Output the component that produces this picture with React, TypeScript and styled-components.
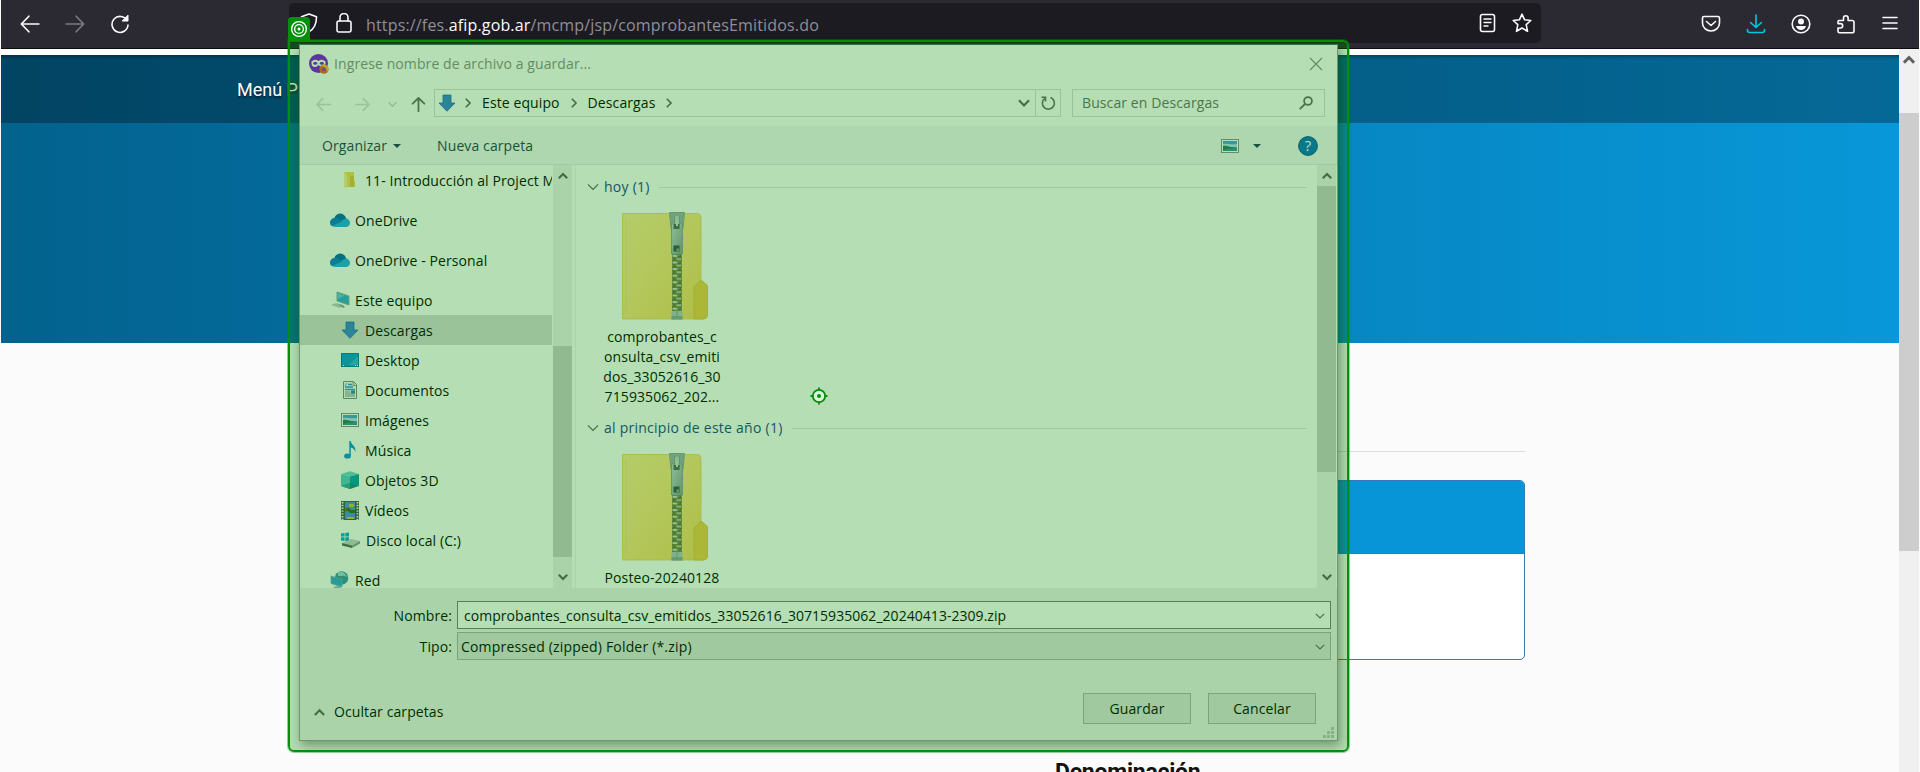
import React from "react";
import styled, { createGlobalStyle, css } from "styled-components";

const Global = createGlobalStyle`
  * { box-sizing: border-box; }
  html, body { margin: 0; padding: 0; background: #fbfbfb; overflow: hidden; }
`;

const Screen = styled.div`
  position: relative;
  width: 1920px;
  height: 772px;
  overflow: hidden;
  background: #fbfbfb;
  display: flex;
  flex-direction: column;
  font-family: "Open Sans", "Noto Sans", sans-serif;
`;

/* ---------- browser toolbar ---------- */

const BrowserBar = styled.div`
  height: 49px;
  flex: none;
  margin: 0 1px;
  background: #2b2a33;
  border-bottom: 1px solid #0c0c0d;
  display: flex;
  align-items: flex-start;
`;

const NavButtons = styled.div`
  width: 288px;
  height: 47px;
  padding-left: 19px;
  display: flex;
  align-items: center;
  gap: 25px;
`;

const UrlBar = styled.div`
  width: 1252px;
  height: 40px;
  margin-top: 3px;
  border-radius: 5px;
  background: #1c1b22;
  display: flex;
  align-items: center;
  padding: 0 9px 1px 8px;
`;

const LockBox = styled.div`
  display: flex;
  gap: 16px;
  width: 69px;
`;

const Url = styled.div`
  flex: 1;
  color: #8f8f96;
  font-size: 16px;
  line-height: 24px;
  letter-spacing: 0.16px;
  white-space: nowrap;
  padding-top: 5px;
  b {
    font-weight: 400;
    color: #fbfbfe;
  }
`;

const UrlActions = styled.div`
  display: flex;
  gap: 15px;
  align-items: center;
`;

const BrowserActions = styled.div`
  flex: 1;
  height: 47px;
  display: flex;
  align-items: center;
  justify-content: flex-end;
  gap: 25px;
  padding-right: 20px;
`;

/* ---------- web page ---------- */

const PageArea = styled.div`
  flex: 1;
  min-height: 0;
  margin-left: 1px;
  display: flex;
`;

const Page = styled.div`
  width: 1898px;
  display: flex;
  flex-direction: column;
  overflow: hidden;
`;

const Hero = styled.div`
  border-top: 6px solid #fff;
  height: 294px;
  flex: none;
  background: linear-gradient(90deg, #03628e 0%, #0897d9 100%);
`;

const HeroNav = styled.div`
  height: 68px;
  background: rgba(0, 0, 0, 0.3);
  box-shadow: inset 0 4px 3px -2px rgba(0, 0, 0, 0.3);
  padding: 22px 0 0 236px;
  color: #fff;
  font: 400 18px/26px Roboto, sans-serif;
  text-shadow: 0 2px 2px rgba(0, 0, 0, 0.6);
`;

const Content = styled.div`
  width: 1150px;
  margin-left: 374px;
  border-top: 1px solid #dcdcdc;
  margin-top: 108px;
`;

const Card = styled.div`
  margin-top: 28px;
  height: 180px;
  border: 1px solid #337ab7;
  border-radius: 5px;
  background: #fff;
  overflow: hidden;
`;

const CardHead = styled.div`
  height: 73px;
  background: #0895d7;
  border-bottom: 1px solid #337ab7;
`;

const CardCaption = styled.div`
  margin: 99px 0 0 680px;
  font: 700 23px/28px Roboto, sans-serif;
  letter-spacing: -0.25px;
  color: #111;
`;

const PageScroll = styled.div`
  width: 20px;
  background: #f0f0f0;
  display: flex;
  flex-direction: column;
  align-items: center;
  padding-top: 5px;
`;

const PageThumb = styled.div`
  margin-top: 47px;
  width: 20px;
  height: 438px;
  background: #cdcdcd;
`;

/* ---------- save dialog ---------- */

const Dialog = styled.div`
  position: absolute;
  left: 299px;
  top: 44px;
  width: 1039px;
  height: 697px;
  border: 1px solid #9b9b9b;
  border-top-color: #55605a;
  background: #fff;
  box-shadow: 2px 4px 10px rgba(0, 0, 0, 0.4);
  display: flex;
  flex-direction: column;
  font-size: 14px;
  line-height: 20px;
  letter-spacing: 0.1px;
  color: #000;
  white-space: nowrap;
  svg {
    flex: none;
  }
`;

const TitleBar = styled.div`
  height: 37px;
  display: flex;
  align-items: center;
  padding: 0 14px 0 9px;
  gap: 5px;
  color: #8c8c8c;
`;

const Grow = styled.span`
  flex: 1;
`;

const PathBar = styled.div`
  height: 44px;
  display: flex;
  align-items: flex-start;
  padding: 7px 12px 0 16px;
`;

const HistoryButtons = styled.div`
  width: 118px;
  height: 30px;
  display: flex;
  align-items: center;
`;

const Slot = styled.span<{ $l: number }>`
  display: flex;
  margin-left: ${(p) => p.$l}px;
`;

const Address = styled.div`
  width: 627px;
  height: 28px;
  border: 1px solid #d9d9d9;
  display: flex;
  align-items: center;
  padding-left: 3px;
`;

const Crumb = styled.span`
  margin: 0 9px;
`;

const Refresh = styled.div`
  width: 25px;
  height: 26px;
  border-left: 1px solid #d9d9d9;
  display: flex;
  align-items: center;
  justify-content: center;
`;

const Search = styled.div`
  width: 253px;
  height: 28px;
  margin-left: 11px;
  border: 1px solid #d9d9d9;
  display: flex;
  align-items: center;
  padding: 0 11px 0 9px;
  color: #6d6d6d;
`;

const ToolBar = styled.div`
  height: 39px;
  background: #f5f6f7;
  border-bottom: 1px solid #e3e4e5;
  display: flex;
  align-items: center;
  padding: 1px 19px 0 22px;
  color: #1e395b;
`;

const Caret = styled.i`
  width: 0;
  height: 0;
  border: 4px solid transparent;
  border-top-color: #1e395b;
  border-bottom: 0;
  margin-left: 6px;
`;

const Panes = styled.div`
  height: 423px;
  display: flex;
  overflow: hidden;
  padding-right: 1px;
`;

const Tree = styled.div`
  width: 253px;
  overflow: hidden;
  flex: none;
`;

const TreeRow = styled.div<{ $deep?: boolean; $gap?: boolean; $on?: boolean }>`
  height: 30px;
  width: 252px;
  margin-top: ${(p) => (p.$gap ? 10 : 0)}px;
  padding-left: ${(p) => (p.$deep ? 41 : 30)}px;
  display: flex;
  align-items: center;
  gap: ${(p) => (p.$deep ? 6 : 5)}px;
  overflow: hidden;
  ${(p) => p.$on && css`background: #d9d9d9;`}
  span {
    padding-top: 1px;
  }
`;

const Scroll = styled.div`
  width: 19px;
  flex: none;
  background: #f0f0f0;
  display: flex;
  flex-direction: column;
  align-items: center;
  padding: 6px 0 6px;
  justify-content: space-between;
`;

const Thumb = styled.div<{ $top: number; $h: number }>`
  width: 19px;
  height: ${(p) => p.$h}px;
  margin-top: ${(p) => p.$top}px;
  margin-bottom: auto;
  background: #cdcdcd;
`;

const Files = styled.div`
  flex: 1;
  margin-left: 3px;
  border-left: 1px solid #f0f0f0;
  padding: 12px 10px 0 11px;
  overflow: hidden;
`;

const GroupHead = styled.div`
  height: 20px;
  display: flex;
  align-items: center;
  color: #1e3c8c;
  gap: 5px;
  letter-spacing: 0.25px;
`;

const GroupLine = styled.div`
  flex: 1;
  height: 1px;
  margin: 1px 0 0 4px;
  background: #e2e2e2;
`;

const FileItem = styled.div`
  width: 122px;
  margin: 15px 0 0 14px;
  display: flex;
  flex-direction: column;
  align-items: center;
  text-align: center;
  height: 206px;
  > svg {
    margin-left: 6px;
  }
`;

const FileName = styled.div`
  margin-top: 7px;
  white-space: pre-line;
  line-height: 20px;
`;

const Form = styled.div`
  flex: 1;
  background: #f0f0f0;
  display: flex;
  flex-direction: column;
  padding: 13px 6px 0 0;
`;

const Field = styled.div`
  display: flex;
  height: 28px;
  margin-bottom: 3px;
`;

const Label = styled.div`
  width: 157px;
  padding: 5px 5px 0 0;
  text-align: right;
`;

const Combo = styled.div<{ $input?: boolean }>`
  flex: 1;
  border: 1px solid ${(p) => (p.$input ? "#7a7a7a" : "#adadad")};
  background: ${(p) => (p.$input ? "#fff" : "#e1e1e1")};
  padding: 1px 5px 0 ${(p) => (p.$input ? 6 : 3)}px;
  letter-spacing: ${(p) => (p.$input ? 0.04 : 0.18)}px;
  display: flex;
  align-items: center;
  justify-content: space-between;
`;

const Footer = styled.div`
  display: flex;
  align-items: center;
  height: 40px;
  margin-top: 28px;
  padding: 0 15px 0 14px;
  gap: 17px;
`;

const Toggle = styled.div`
  flex: 1;
  display: flex;
  align-items: center;
  gap: 9px;
  padding-top: 2px;
`;

const Button = styled.div`
  width: 108px;
  height: 31px;
  margin-top: -5px;
  border: 1px solid #adadad;
  background: #e1e1e1;
  text-align: center;
  line-height: 30px;
`;

const Grip = styled.div`
  position: absolute;
  right: 3px;
  bottom: 2px;
  display: flex;
`;

/* ---------- highlight over the dialog ---------- */

const Highlight = styled.div`
  position: absolute;
  left: 288px;
  top: 40px;
  width: 1061px;
  height: 712px;
  border: 2px solid #028f0c;
  border-radius: 0 6px 6px 6px;
  background: rgba(2, 143, 4, 0.295);
  background-clip: padding-box;
  box-shadow: 0 0 0 1px rgba(2, 143, 4, 0.4);
`;

const Badge = styled.div`
  position: absolute;
  left: 288px;
  top: 17px;
  width: 22px;
  height: 23px;
  border-radius: 4px 4px 0 0;
  background: #028f0c;
  display: flex;
  align-items: center;
  justify-content: center;
`;

const Target = styled.div`
  position: absolute;
  left: 810px;
  top: 387px;
  display: flex;
`;

/* ---------- drawings ---------- */

const Chevron = ({ dir, w = 10, c = "#606060", t = 1.6 }: { dir: "up" | "down" | "right"; w?: number; c?: string; t?: number }) => {
  const r = { down: 0, up: 180, right: -90 }[dir];
  return (
    <svg width={w} height={w} viewBox="0 0 10 10">
      <path d="M0.8 2.8 L5 7 L9.2 2.8" fill="none" stroke={c} strokeWidth={t} transform={`rotate(${r} 5 5)`} />
    </svg>
  );
};

const Arrow = ({ dir, size = 18, c, t = 1.6 }: { dir: "left" | "right" | "up"; size?: number; c: string; t?: number }) => (
  <svg width={size} height={size} viewBox="0 0 18 18">
    <path d="M17 9H1.5M8 2L1.2 9L8 16" fill="none" stroke={c} strokeWidth={t} strokeLinecap="round" strokeLinejoin="round"
      transform={`rotate(${{ left: 0, right: 180, up: 90 }[dir]} 9 9)`} />
  </svg>
);

const DownArrow = () => (
  <svg width="18" height="18" viewBox="0 0 18 18">
    <path d="M5 1h8v8h4l-8 8.3L1 9h4z" fill="#3d80d8" stroke="#1c68ba" strokeWidth="0.8" />
  </svg>
);

const Picture = () => (
  <svg width="18" height="14" viewBox="0 0 18 14">
    <rect x="0.5" y="0.5" width="17" height="13" fill="#fff" stroke="#8c8c8c" />
    <rect x="2" y="2" width="14" height="10" fill="#4f9bdc" />
    <path d="M2 5c4-1 7 1 14 0v3H2z" fill="#b9dcf2" />
    <path d="M2 7c3-1 6 1 14 2v3H2z" fill="#2d7a58" />
    <path d="M5 10l11-1v3H2z" fill="#3c8dac" />
  </svg>
);

const Cloud = () => (
  <svg width="20" height="14" viewBox="0 0 20 14">
    <path d="M4 6a7 7 0 0 1 12-1c3 1 4 3 4 5 0 1-1 4-4 4H5c-6 0-6-7-1-8z" fill="#28a8ea" />
    <path d="M4.500 4.500C7-1 14-1 16 5l-5 3z" fill="#0364b8" />
    <path d="M0 9.500C0 6 4 4 7 5l5.500 3.200L2 13C.8 12.500 0 11 0 9.500z" fill="#0f78d4" />
  </svg>
);

const FolderSmall = () => (
  <svg width="18" height="18" viewBox="0 0 18 18">
    <path d="M3 1h10v9h1v6H3z" fill="#f5d566" />
    <path d="M3 1l3 3v13.500L3 16z" fill="#ffe79a" />
    <path d="M9 5h4v11H9z" fill="#e6bf3c" />
  </svg>
);

const Computer = () => (
  <svg width="20" height="18" viewBox="0 0 20 18">
    <path d="M7 1l12 4v9L7 10z" fill="#33a6dc" stroke="#9aa7ad" />
    <path d="M1 14l5-2 8 2-4 3z" fill="#c2c8cb" />
    <path d="M8 13l6 2 1 1-2 1z" fill="#8d9699" />
    <path d="M7.500 2l7 2.500-7 4z" fill="#67c3ec" />
  </svg>
);

const Desktop = () => (
  <svg width="18" height="14" viewBox="0 0 18 14">
    <rect x="0.500" y="0.500" width="17" height="13" fill="#1098d8" stroke="#0874ac" />
    <path d="M8 12L17 3v9z" fill="#2ab2ea" />
    <path d="M2 12.500h1M14 12.500h1M16 12.500h1" stroke="#fff" />
  </svg>
);

const Document = () => (
  <svg width="18" height="18" viewBox="0 0 18 18">
    <path d="M2.500 .5h10l3 3v14h-13z" fill="#fafafa" stroke="#7d8587" />
    <path d="M12 1v3.500h3" fill="#ddd" stroke="#7d8587" strokeWidth=".8" />
    <path d="M4 6h8M7 3.500h4M4 8.500h10" stroke="#2f96d4" strokeWidth="1.400" />
    <path d="M4 11h5M4 13h10M4 15h10M4 5l2-3" stroke="#7d9097" />
    <rect x="10" y="9.500" width="4" height="3" fill="#2f7fb4" />
  </svg>
);

const Music = () => (
  <svg width="18" height="18" viewBox="0 0 18 18">
    <ellipse cx="6.500" cy="15" rx="3.400" ry="2.600" fill="#1090dc" />
    <path d="M8.300 0h1.500c0 4 5.500 4.500 4.500 11-1-3-2.500-4-4.500-4.500V15H8.300z" fill="#1090dc" />
  </svg>
);

const Cube = () => (
  <svg width="18" height="18" viewBox="0 0 18 18">
    <path d="M0 3L9 .3 18 3 9 5.500z" fill="#6fd0cc" />
    <path d="M0 3l9 2.500V13l-9 2z" fill="#5cc6cb" />
    <path d="M18 3L9 5.500V13l9 2z" fill="#0a9bb0" />
    <path d="M0 15l9-3 9 3-9 3z" fill="#0f8590" />
    <path d="M0 15l9-3v6z" fill="#37a5a8" />
  </svg>
);

const Film = () => (
  <svg width="18" height="19" viewBox="0 0 18 19">
    <rect width="18" height="19" fill="#46504f" />
    <rect x="4" y="1" width="10" height="8" fill="#4d8ee0" />
    <rect x="4" y="10" width="10" height="8" fill="#4d8ee0" />
    <path d="M8 3h5v3H8zM6 16h7v2H6z" fill="#d8bb2c" />
    <path d="M4 7h4l2 2h4v3H9z" fill="#3b5f2a" />
    <path d="M1.500 1v18M16.500 1v18" stroke="#fff" strokeWidth="1.800" strokeDasharray="1.400 1.400" />
  </svg>
);

const Disk = () => (
  <svg width="19" height="17" viewBox="0 0 19 17">
    <path d="M0 1.500l3.500-.5v3.500H0zM4.300 1L8 .5v4H4.300zM0 5.300h3.500V9L0 8.500zM4.300 5.300H8v4L4.300 9z" fill="#08a6d8" />
    <path d="M1 11l9-4 9 2-8 4.500z" fill="#c9cdcf" />
    <path d="M1 11l10 2.500V16L1 13.500z" fill="#56605c" />
    <path d="M11 13.500L19 9v2.500L11 16z" fill="#8f9795" />
  </svg>
);

const Network = () => (
  <svg width="20" height="18" viewBox="0 0 20 18">
    <circle cx="11.500" cy="7" r="6.800" fill="#3f8fa8" />
    <path d="M8 1c5-1 7 1 9 5-3-2-6-1-9-1z" fill="#9ed3dd" />
    <path d="M1 5l11 3.500V16L1 12.500z" fill="#2fa4dc" stroke="#88aab5" strokeWidth=".8" />
    <path d="M3 16l6-1 2 2-5 1z" fill="#9ab" />
  </svg>
);

const ZipFolder = () => (
  <svg width="86" height="108" viewBox="0 0 86 108">
    <defs>
      <linearGradient id="zipBody" x1="0" y1="0" x2="1" y2="1">
        <stop offset="0" stopColor="#ffe693" />
        <stop offset="0.400" stopColor="#fde084" />
        <stop offset="1" stopColor="#f6d162" />
      </linearGradient>
      <linearGradient id="zipPull" x1="0" y1="0" x2="1" y2="1">
        <stop offset="0" stopColor="#c8d2d4" />
        <stop offset="1" stopColor="#8a989a" />
      </linearGradient>
      <pattern id="zipTeeth" width="9" height="6.600" patternUnits="userSpaceOnUse" x="50.500" y="42">
        <rect width="9" height="6.600" fill="#6d6b2a" />
        <path d="M0 .8h5v2.200H0z" fill="#d2dad6" />
        <path d="M4 4h5v2.200H4z" fill="#b3beba" />
        <path d="M4 1.500h3M2 4.800h2" stroke="#8c9a92" />
      </pattern>
    </defs>
    <path d="M0.500 1.500H75q4 0 4 4V68l6 5v30q0 4-4 4H.5z" fill="url(#zipBody)" stroke="#e9cb58" strokeWidth="0.800" />
    <path d="M72 107V75l7-7 6.500 6v29q0 4-4 4z" fill="#f3c84e" stroke="#e0b93f" strokeWidth="0.800" />
    <path d="M7 5v98" stroke="#f4e0a0" />
    <path d="M4 5v98" stroke="#f4d477" strokeWidth=".8" />
    <rect x="50" y="40" width="10" height="60" fill="url(#zipTeeth)" />
    <path d="M47.500 .5h15l-1.500 16H49z" fill="#9dacae" stroke="#8fa0a0" />
    <path d="M49.500 11h11v31h-11z" fill="url(#zipPull)" stroke="#8c9c9c" />
    <path d="M52.500 4q2.500-3 5 0v10h-5z" fill="#c3cdcf" stroke="#8b999a" />
    <rect x="51.500" y="12" width="6" height="5" fill="#54625f" />
    <rect x="54" y="8" width="2" height="6" fill="#cfd8d9" />
    <rect x="51.500" y="33.500" width="6" height="6" fill="#3d4b48" />
    <rect x="54.500" y="36.500" width="2.500" height="2.500" fill="#8fa09c" />
    <path d="M49.500 99h11v8.500h-11z" fill="#b5c1c3" />
    <path d="M49.500 104h11v3.500h-11z" fill="#91a09f" />
    <path d="M55 99v5" stroke="#8b9a9b" />
  </svg>
);

const AppIcon = () => (
  <svg width="20" height="20" viewBox="0 0 20 20">
    <circle cx="9.500" cy="9.500" r="9.500" fill="#8312d8" />
    <path d="M2.500 7.500Q6 4.500 9.500 7q3.500-2.500 7 .5Q17 13 13 13q-2 0-3.500-2Q8 13 6 13 2 13 2.500 7.500z" fill="#fff" />
    <ellipse cx="6.200" cy="9.200" rx="2" ry="1.500" fill="#7b1fc4" />
    <ellipse cx="12.800" cy="9.200" rx="2" ry="1.500" fill="#7b1fc4" />
    <circle cx="15" cy="15.200" r="4.600" fill="#ff5a1c" />
    <path d="M12 12q3-3 6.500 0 2 4-1 6 1-4-2-5z" fill="#ffbd2e" />
    <circle cx="14.800" cy="15.400" r="2" fill="#8a3fc9" />
  </svg>
);

const Help = () => (
  <svg width="20" height="20" viewBox="0 0 20 20">
    <circle cx="10" cy="10" r="9.400" fill="#0b6fc2" stroke="#07508c" />
    <text x="10" y="15.200" textAnchor="middle" fontFamily="Open Sans" fontSize="15" fill="#fff">?</text>
  </svg>
);

const I = "#fbfbfe";
const BrowserIcon = ({ w = 20, children, c = I }: { w?: number; children: React.ReactNode; c?: string }) => (
  <svg width={w} height="20" viewBox={`0 0 ${w} 20`} fill="none" stroke={c} strokeWidth="1.600" strokeLinecap="round" strokeLinejoin="round">
    {children}
  </svg>
);

const treeItems = [
  { icon: <FolderSmall />, text: "11- Introducción al Project M", deep: true },
  { icon: <Cloud />, text: "OneDrive", gap: true },
  { icon: <Cloud />, text: "OneDrive - Personal", gap: true },
  { icon: <Computer />, text: "Este equipo", gap: true },
  { icon: <DownArrow />, text: "Descargas", deep: true, on: true },
  { icon: <Desktop />, text: "Desktop", deep: true },
  { icon: <Document />, text: "Documentos", deep: true },
  { icon: <Picture />, text: "Imágenes", deep: true },
  { icon: <Music />, text: "Música", deep: true },
  { icon: <Cube />, text: "Objetos 3D", deep: true },
  { icon: <Film />, text: "Vídeos", deep: true },
  { icon: <Disk />, text: "Disco local (C:)", deep: true },
  { icon: <Network />, text: "Red", gap: true },
];

const SaveDialog = () => (
  <Dialog>
    <TitleBar>
      <AppIcon />
      <span>Ingrese nombre de archivo a guardar...</span>
      <Grow />
      <svg width="14" height="14" viewBox="0 0 14 14"><path d="M1 1l12 12M13 1L1 13" stroke="#8a8a8a" strokeWidth="1.100" /></svg>
    </TitleBar>
    <PathBar>
      <HistoryButtons>
        <Slot $l={0}><Arrow dir="left" size={15} c="#d9d9d9" t={2} /></Slot>
        <Slot $l={24}><Arrow dir="right" size={15} c="#d9d9d9" t={2} /></Slot>
        <Slot $l={18}><Chevron dir="down" w={9} c="#cfcfcf" /></Slot>
        <Slot $l={14}><Arrow dir="up" size={15} c="#6a6a6a" t={2.2} /></Slot>
      </HistoryButtons>
      <Address>
        <DownArrow />
        <Slot $l={7}><Chevron dir="right" /></Slot>
        <Crumb>Este equipo</Crumb>
        <Chevron dir="right" />
        <Crumb>Descargas</Crumb>
        <Chevron dir="right" />
        <Grow />
        <Chevron dir="down" w={12} t={1.8} />
        <Slot $l={5}>
          <Refresh>
            <svg width="16" height="16" viewBox="0 0 16 16" fill="none" stroke="#6a6a6a" strokeWidth="1.600">
              <path d="M10.500 2.500A6 6 0 1 1 4.800 3.300" /><path d="M1.500 2.200h4v4.300" />
            </svg>
          </Refresh>
        </Slot>
      </Address>
      <Search>
        <span>Buscar en Descargas</span>
        <Grow />
        <svg width="14" height="14" viewBox="0 0 14 14" fill="none" stroke="#6a6a6a" strokeWidth="1.800">
          <circle cx="9" cy="5" r="3.900" /><path d="M6 8L.8 13.200" />
        </svg>
      </Search>
    </PathBar>
    <ToolBar>
      <span>Organizar</span><Caret />
      <Slot $l={36}>Nueva carpeta</Slot>
      <Grow />
      <Picture />
      <Slot $l={8}><Caret /></Slot>
      <Slot $l={37}><Help /></Slot>
    </ToolBar>
    <Panes>
      <Tree>
        {treeItems.map((t) => (
          <TreeRow key={t.text} $deep={t.deep} $gap={t.gap} $on={t.on}>{t.icon}<span>{t.text}</span></TreeRow>
        ))}
      </Tree>
      <Scroll>
        <Chevron dir="up" t={2.2} />
        <Thumb $top={165} $h={211} />
        <Chevron dir="down" t={2.2} />
      </Scroll>
      <Files>
        <GroupHead><Chevron dir="down" w={12} t={1} /><span>hoy (1)</span><GroupLine /></GroupHead>
        <FileItem>
          <ZipFolder />
          <FileName>{"comprobantes_c\nonsulta_csv_emiti\ndos_33052616_30\n715935062_202..."}</FileName>
        </FileItem>
        <GroupHead><Chevron dir="down" w={12} t={1} /><span>al principio de este año (1)</span><GroupLine /></GroupHead>
        <FileItem>
          <ZipFolder />
          <FileName>Posteo-20240128</FileName>
        </FileItem>
      </Files>
      <Scroll>
        <Chevron dir="up" t={2.2} />
        <Thumb $top={5} $h={286} />
        <Chevron dir="down" t={2.2} />
      </Scroll>
    </Panes>
    <Form>
      <Field>
        <Label>Nombre:</Label>
        <Combo $input><span>comprobantes_consulta_csv_emitidos_33052616_30715935062_20240413-2309.zip</span><Chevron dir="down" t={1.100} /></Combo>
      </Field>
      <Field>
        <Label>Tipo:</Label>
        <Combo><span>Compressed (zipped) Folder (*.zip)</span><Chevron dir="down" t={1.100} /></Combo>
      </Field>
      <Footer>
        <Toggle><Chevron dir="up" w={11} t={2} /><span>Ocultar carpetas</span></Toggle>
        <Button>Guardar</Button>
        <Button>Cancelar</Button>
      </Footer>
    </Form>
    <Grip>
      <svg width="11" height="11" viewBox="0 0 11 11" fill="#bfbfbf">
        <path d="M8 0h3v3H8zM8 4h3v3H8zM8 8h3v3H8zM4 4h3v3H4zM4 8h3v3H4zM0 8h3v3H0z" />
      </svg>
    </Grip>
  </Dialog>
);

export default function App() {
  return (
    <Screen>
      <Global />
      <BrowserBar>
        <NavButtons>
          <Arrow dir="left" size={20} c={I} t={1.5} />
          <Arrow dir="right" size={20} c="#7b7a82" t={1.5} />
          <BrowserIcon>
            <path d="M17 6.500A8 8 0 1 0 18 11" /><path d="M18 1.500V7h-5.500z" fill={I} strokeWidth="1" />
          </BrowserIcon>
        </NavButtons>
        <UrlBar>
          <LockBox>
            <BrowserIcon w={22}><path d="M12 1l7.500 2.800c0 7-2 12-7.500 15-5.500-3-7.500-8-7.500-15z" /></BrowserIcon>
            <BrowserIcon w={18}><rect x="2" y="8" width="14" height="11" rx="2" /><path d="M5 8V4.500a4 4 0 0 1 8 0V8" /></BrowserIcon>
          </LockBox>
          <Url>https://fes.<b>afip.gob.ar</b>/mcmp/jsp/comprobantesEmitidos.do</Url>
          <UrlActions>
            <BrowserIcon w={18}><rect x="1.500" y="1.500" width="14" height="17" rx="2" /><path d="M5 6h7M5 9.500h7M5 13h4" strokeWidth="1.400" /></BrowserIcon>
            <BrowserIcon><path d="M10 1.200l2.600 5.600 6.200.7-4.600 4.100 1.300 6.700L10 15l-5.500 3.300 1.300-6.700L1.200 7.500l6.200-.7z" /></BrowserIcon>
          </UrlActions>
        </UrlBar>
        <BrowserActions>
          <BrowserIcon><path d="M3 2.500h14q1.500 0 1.500 1.500v5a8.500 8 0 0 1-17 0V4q0-1.500 1.500-1.500z" /><path d="M5.500 7.500L10 11.500l4.500-4" /></BrowserIcon>
          <BrowserIcon c="#00c8e6"><path d="M10 1v12M4.500 8.500L10 13.500l5.500-5M1.500 15.500v1q0 2 2 2h13q2 0 2-2v-1" /></BrowserIcon>
          <BrowserIcon><circle cx="10" cy="10" r="8.800" /><circle cx="10" cy="7.500" r="3" fill={I} stroke="none" /><path d="M5 12h10q-1 4-5 4t-5-4z" fill={I} stroke="none" /></BrowserIcon>
          <BrowserIcon><path d="M3 6.500h4.500V4a2.300 2.300 0 0 1 4.600 0v2.500H16q2 0 2 2V17q0 1.800-2 1.800H3.500q-1.500 0-1.500-1.500V14h2.500a2.200 2.200 0 0 0 0-4.400H2V8q0-1.500 1-1.500z" /></BrowserIcon>
          <BrowserIcon w={18}><path d="M2 3.500h14M2 9h14M2 14.500h14" /></BrowserIcon>
        </BrowserActions>
      </BrowserBar>
      <PageArea>
        <Page>
          <Hero><HeroNav>Menú Principal</HeroNav></Hero>
          <Content>
            <Card><CardHead /></Card>
            <CardCaption>Denominación</CardCaption>
          </Content>
        </Page>
        <PageScroll>
          <Chevron dir="up" w={12} t={2.4} />
          <PageThumb />
        </PageScroll>
      </PageArea>
      <SaveDialog />
      <Highlight />
      <Badge>
        <svg width="18" height="18" viewBox="0 0 18 18" fill="none" stroke="#fff" strokeWidth="1.400">
          <circle cx="9" cy="9" r="7.400" /><circle cx="9" cy="9" r="4.400" /><circle cx="9" cy="9" r="1.500" fill="#fff" stroke="none" />
        </svg>
      </Badge>
      <Target>
        <svg width="18" height="18" viewBox="0 0 18 18" fill="none" stroke="#028f0c" strokeWidth="1.800">
          <circle cx="9" cy="9" r="6.200" fill="#d9f2da" /><circle cx="9" cy="9" r="2" fill="#028f0c" stroke="none" />
          <path d="M9 .5v3M9 14.500v3M.5 9h3M14.500 9h3" />
        </svg>
      </Target>
    </Screen>
  );
}
